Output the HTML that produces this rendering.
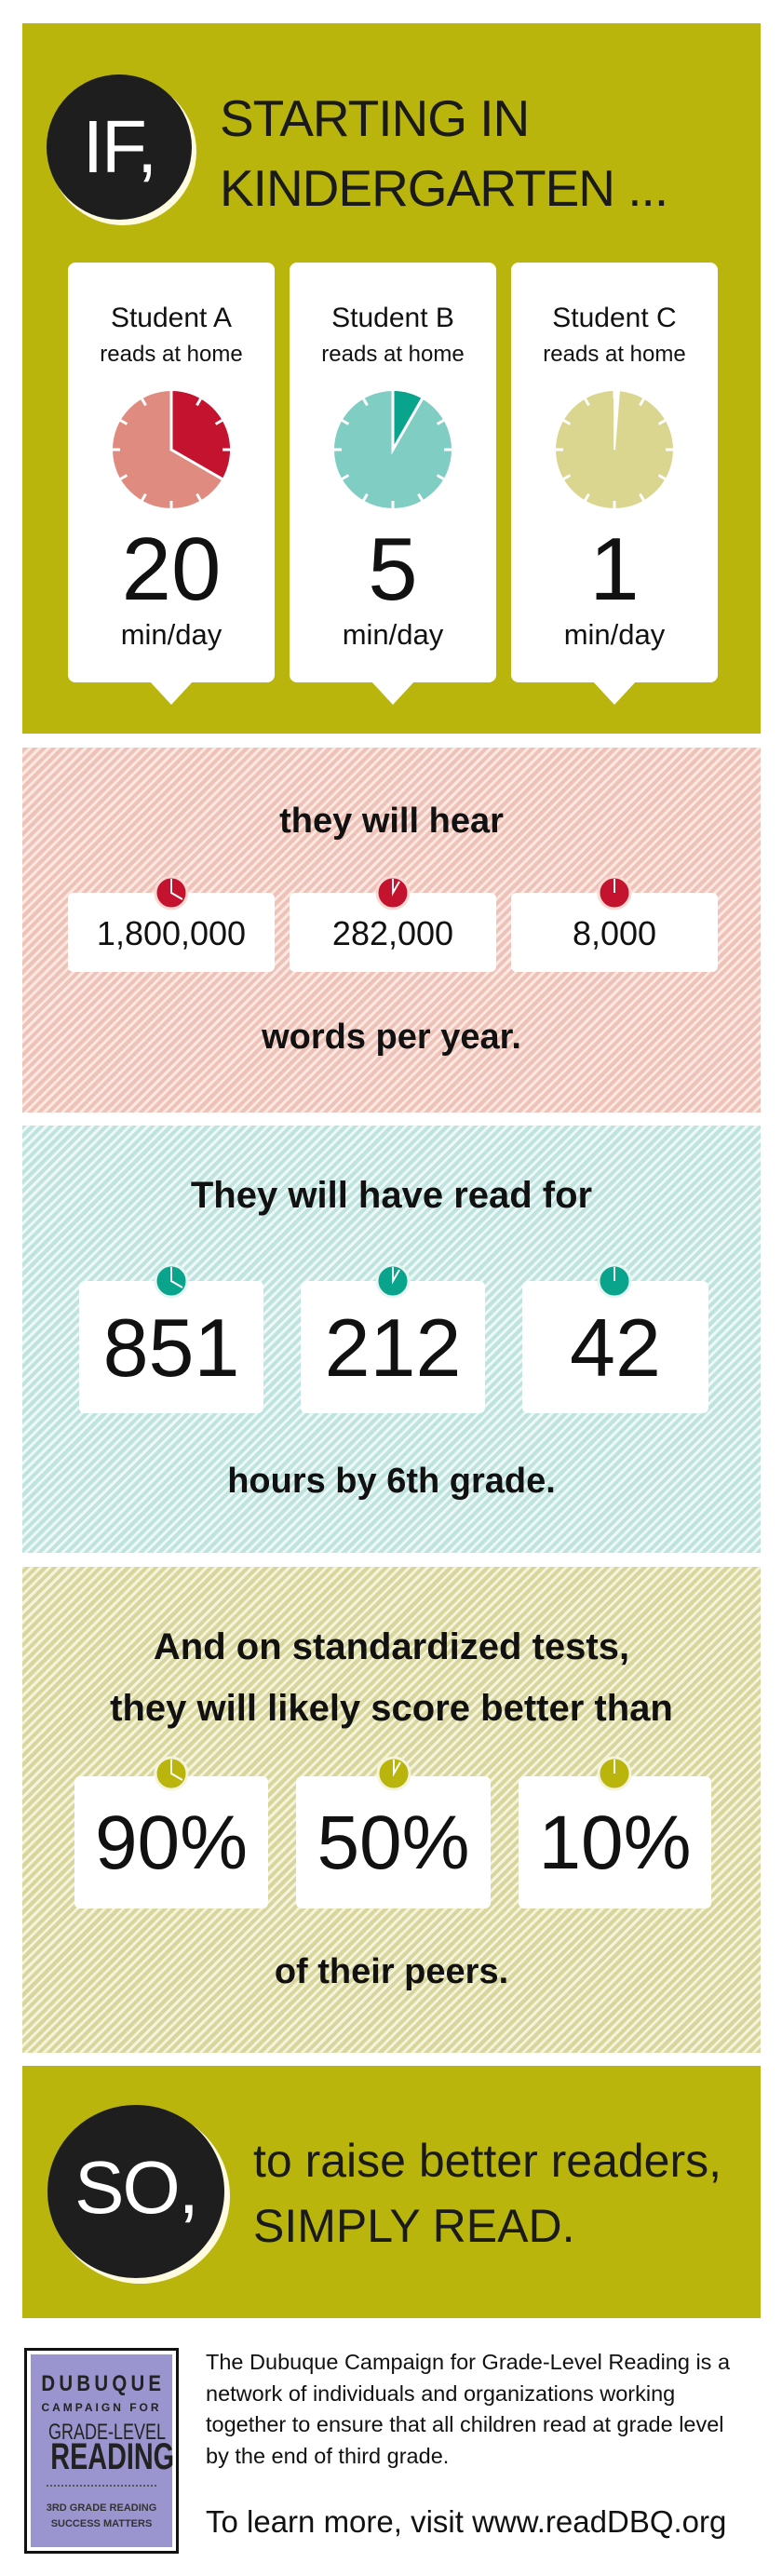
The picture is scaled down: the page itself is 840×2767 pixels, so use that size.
<!DOCTYPE html>
<html><head><meta charset="utf-8"><style>
*{margin:0;padding:0;box-sizing:border-box}
body{width:840px;height:2767px;background:#fff;position:relative;font-family:"Liberation Sans",sans-serif;color:#111;overflow:hidden}
.a{position:absolute}
.sec{position:absolute;left:24px;width:793px}
.c{text-align:center;white-space:nowrap}
.card{position:absolute;top:282px;width:222px;height:451px;background:#fff;border-radius:8px}
.card:after{content:"";position:absolute;left:87px;bottom:-24px;width:0;height:0;border-left:24px solid transparent;border-right:24px solid transparent;border-top:26px solid #fff}
.box{position:absolute;background:#fff;border-radius:6px}
.bold{font-weight:bold}
</style></head><body>

<!-- Section 1 -->
<div class="sec" style="top:25px;height:763px;background:#b9b50c"></div>
<div class="a" style="left:53px;top:84px;width:158px;height:158px;border-radius:50%;background:#fffbe0"></div>
<div class="a" style="left:50px;top:80px;width:156px;height:156px;border-radius:50%;background:#1e1e1e"></div>
<div class="a c" style="left:50px;top:108px;width:156px;font-size:80px;line-height:100px;color:#fff;letter-spacing:-2px">IF,</div>
<div class="a" style="left:236px;top:90px;font-size:55px;line-height:75px;color:#1a1a1a;white-space:nowrap;letter-spacing:-1px">STARTING IN<br>KINDERGARTEN ...</div>

<div class="card" style="left:73px"></div>
<div class="card" style="left:311px"></div>
<div class="card" style="left:549px"></div>

<div class="a c" style="left:73px;top:324px;width:222px;font-size:30px;line-height:36px">Student A</div>
<div class="a c" style="left:311px;top:324px;width:222px;font-size:30px;line-height:36px">Student B</div>
<div class="a c" style="left:549px;top:324px;width:222px;font-size:30px;line-height:36px">Student C</div>
<div class="a c" style="left:73px;top:366px;width:222px;font-size:24px;line-height:30px">reads at home</div>
<div class="a c" style="left:311px;top:366px;width:222px;font-size:24px;line-height:30px">reads at home</div>
<div class="a c" style="left:549px;top:366px;width:222px;font-size:24px;line-height:30px">reads at home</div>

<svg class="a" style="left:0;top:0" width="840" height="790">
<defs>
<g id="ticks" stroke="#fff" stroke-width="3">
<line x1="0" y1="-63" x2="0" y2="-55"/><line x1="0" y1="63" x2="0" y2="55"/>
<line x1="-63" y1="0" x2="-55" y2="0"/><line x1="63" y1="0" x2="55" y2="0"/>
<line x1="31.5" y1="-54.6" x2="27.5" y2="-47.6"/><line x1="54.6" y1="-31.5" x2="47.6" y2="-27.5"/>
<line x1="54.6" y1="31.5" x2="47.6" y2="27.5"/><line x1="31.5" y1="54.6" x2="27.5" y2="47.6"/>
<line x1="-31.5" y1="54.6" x2="-27.5" y2="47.6"/><line x1="-54.6" y1="31.5" x2="-47.6" y2="27.5"/>
<line x1="-54.6" y1="-31.5" x2="-47.6" y2="-27.5"/><line x1="-31.5" y1="-54.6" x2="-27.5" y2="-47.6"/>
</g></defs>
<g transform="translate(184,483)">
<circle r="63" fill="#e08b80"/>
<path d="M0,0 L0,-63 A63,63 0 0 1 54.6,31.5 Z" fill="#c4132f"/>
<path d="M0,-63 L0,0 L54.6,31.5" fill="none" stroke="#fff" stroke-width="3"/>
<use href="#ticks"/></g>
<g transform="translate(422,483)">
<circle r="63" fill="#80cdc4"/>
<path d="M0,0 L0,-63 A63,63 0 0 1 31.5,-54.6 Z" fill="#0aa38c"/>
<path d="M0,-63 L0,0 L31.5,-54.6" fill="none" stroke="#fff" stroke-width="3"/>
<use href="#ticks"/></g>
<g transform="translate(660,483)">
<circle r="63" fill="#dad690"/>
<path d="M0,0 L0,-63 L5,-63 Z" fill="#fff" stroke="#fff" stroke-width="2"/>
<use href="#ticks"/></g>
</svg>

<div class="a c" style="left:73px;top:562px;width:222px;font-size:96px;line-height:100px">20</div>
<div class="a c" style="left:311px;top:562px;width:222px;font-size:96px;line-height:100px">5</div>
<div class="a c" style="left:549px;top:562px;width:222px;font-size:96px;line-height:100px">1</div>
<div class="a c" style="left:73px;top:664px;width:222px;font-size:31px;line-height:36px">min/day</div>
<div class="a c" style="left:311px;top:664px;width:222px;font-size:31px;line-height:36px">min/day</div>
<div class="a c" style="left:549px;top:664px;width:222px;font-size:31px;line-height:36px">min/day</div>

<!-- Section 2 pink -->
<div class="sec" style="top:803px;height:392px;background:repeating-linear-gradient(-45deg,#efc2b8 0 4px,#fbe8e3 4px 7px)"></div>
<div class="a c bold" style="left:24px;top:858px;width:793px;font-size:38px;line-height:48px">they will hear</div>
<div class="box" style="left:73px;top:959px;width:222px;height:85px"></div>
<div class="box" style="left:311px;top:959px;width:222px;height:85px"></div>
<div class="box" style="left:549px;top:959px;width:222px;height:85px"></div>
<div class="a c" style="left:73px;top:981px;width:222px;font-size:36px;line-height:44px">1,800,000</div>
<div class="a c" style="left:311px;top:981px;width:222px;font-size:36px;line-height:44px">282,000</div>
<div class="a c" style="left:549px;top:981px;width:222px;font-size:36px;line-height:44px">8,000</div>
<div class="a c bold" style="left:24px;top:1090px;width:793px;font-size:38px;line-height:48px">words per year.</div>

<!-- Section 3 teal -->
<div class="sec" style="top:1209px;height:459px;background:repeating-linear-gradient(-45deg,#bfe4df 0 4px,#eef8f6 4px 7px)"></div>
<div class="a c bold" style="left:24px;top:1259px;width:793px;font-size:40px;line-height:50px">They will have read for</div>
<div class="box" style="left:85px;top:1376px;width:198px;height:142px"></div>
<div class="box" style="left:323px;top:1376px;width:198px;height:142px"></div>
<div class="box" style="left:561px;top:1376px;width:200px;height:142px"></div>
<div class="a c" style="left:85px;top:1398px;width:198px;font-size:88px;line-height:100px">851</div>
<div class="a c" style="left:323px;top:1398px;width:198px;font-size:88px;line-height:100px">212</div>
<div class="a c" style="left:561px;top:1398px;width:200px;font-size:88px;line-height:100px">42</div>
<div class="a c bold" style="left:24px;top:1566px;width:793px;font-size:38px;line-height:50px">hours by 6th grade.</div>

<!-- Section 4 olive -->
<div class="sec" style="top:1683px;height:522px;background:repeating-linear-gradient(-45deg,#d8d69c 0 4px,#f4f3dc 4px 7px)"></div>
<div class="a c bold" style="left:24px;top:1736px;width:793px;font-size:40px;line-height:66px">And on standardized tests,<br>they will likely score better than</div>
<div class="box" style="left:80px;top:1908px;width:208px;height:142px"></div>
<div class="box" style="left:318px;top:1908px;width:209px;height:142px"></div>
<div class="box" style="left:557px;top:1908px;width:207px;height:142px"></div>
<div class="a c" style="left:80px;top:1930px;width:208px;font-size:82px;line-height:100px">90%</div>
<div class="a c" style="left:318px;top:1930px;width:209px;font-size:82px;line-height:100px">50%</div>
<div class="a c" style="left:557px;top:1930px;width:207px;font-size:82px;line-height:100px">10%</div>
<div class="a c bold" style="left:24px;top:2093px;width:793px;font-size:38px;line-height:50px">of their peers.</div>

<!-- small dots -->
<svg class="a" style="left:0;top:0" width="840" height="2767">
<g stroke="#fff" stroke-width="2" fill="none">
<g transform="translate(184,959)"><circle r="17" fill="#c4132f" stroke="#f6d9d3" stroke-width="3"/><path d="M0,-15 V0 L12,7"/></g>
<g transform="translate(422,959)"><circle r="17" fill="#c4132f" stroke="#f6d9d3" stroke-width="3"/><path d="M0,-15 V0 L7,-12"/></g>
<g transform="translate(660,959)"><circle r="17" fill="#c4132f" stroke="#f6d9d3" stroke-width="3"/><path d="M0,-15 V0"/></g>
<g transform="translate(184,1376)"><circle r="17" fill="#0aa38c" stroke="#e5f5f2" stroke-width="3"/><path d="M0,-15 V0 L12,7"/></g>
<g transform="translate(422,1376)"><circle r="17" fill="#0aa38c" stroke="#e5f5f2" stroke-width="3"/><path d="M0,-15 V0 L7,-12"/></g>
<g transform="translate(660,1376)"><circle r="17" fill="#0aa38c" stroke="#e5f5f2" stroke-width="3"/><path d="M0,-15 V0"/></g>
<g transform="translate(184,1905)"><circle r="17" fill="#b9b50c" stroke="#f4f3dc" stroke-width="3"/><path d="M0,-15 V0 L12,7"/></g>
<g transform="translate(423,1905)"><circle r="17" fill="#b9b50c" stroke="#f4f3dc" stroke-width="3"/><path d="M0,-15 V0 L7,-12"/></g>
<g transform="translate(660,1905)"><circle r="17" fill="#b9b50c" stroke="#f4f3dc" stroke-width="3"/><path d="M0,-15 V0"/></g>
</g></svg>

<!-- Section 5 SO -->
<div class="sec" style="top:2219px;height:271px;background:#b9b50c"></div>
<div class="a" style="left:55px;top:2265px;width:192px;height:188px;border-radius:50%;background:#fffbe0"></div>
<div class="a" style="left:51px;top:2261px;width:190px;height:186px;border-radius:50%;background:#1e1e1e"></div>
<div class="a c" style="left:51px;top:2300px;width:190px;font-size:80px;line-height:100px;color:#fff;letter-spacing:-2px">SO,</div>
<div class="a" style="left:272px;top:2286px;font-size:50px;line-height:70px;color:#1a1a1a;white-space:nowrap">to raise better readers,<br>SIMPLY READ.</div>

<!-- Footer -->
<div class="a" style="left:26px;top:2522px;width:166px;height:221px;border:3px solid #111;background:#fff"></div>
<div class="a" style="left:33px;top:2529px;width:152px;height:207px;background:#9b95cf"></div>
<div class="a c" style="left:33px;top:2546px;width:152px;font-size:24px;line-height:30px;letter-spacing:5px;font-weight:bold;color:#222;transform:scaleX(0.85)">DUBUQUE</div>
<div class="a c" style="left:33px;top:2578px;width:152px;font-size:12px;line-height:16px;letter-spacing:3px;font-weight:bold;color:#222">CAMPAIGN FOR</div>
<div class="a c" style="left:33px;top:2597px;width:152px;font-size:24px;line-height:32px;color:#222;transform:scaleX(0.75)">GRADE-LEVEL</div>
<div class="a c" style="left:33px;top:2616px;width:152px;font-size:40px;line-height:46px;font-weight:bold;color:#222;transform:scaleX(0.72)">READING</div>
<div class="a" style="left:50px;top:2669px;width:118px;border-top:2px dotted #555"></div>
<div class="a c" style="left:33px;top:2686px;width:152px;font-size:11px;line-height:17px;font-weight:bold;color:#333">3RD GRADE READING<br>SUCCESS MATTERS</div>

<div class="a" style="left:221px;top:2521px;font-size:23.5px;line-height:33.5px;white-space:nowrap;color:#111">The Dubuque Campaign for Grade-Level Reading is a<br>network of individuals and organizations working<br>together to ensure that all children read at grade level<br>by the end of third grade.</div>
<div class="a" style="left:221px;top:2688px;font-size:33px;line-height:42px;white-space:nowrap;color:#111">To learn more, visit www.readDBQ.org</div>
</body></html>
